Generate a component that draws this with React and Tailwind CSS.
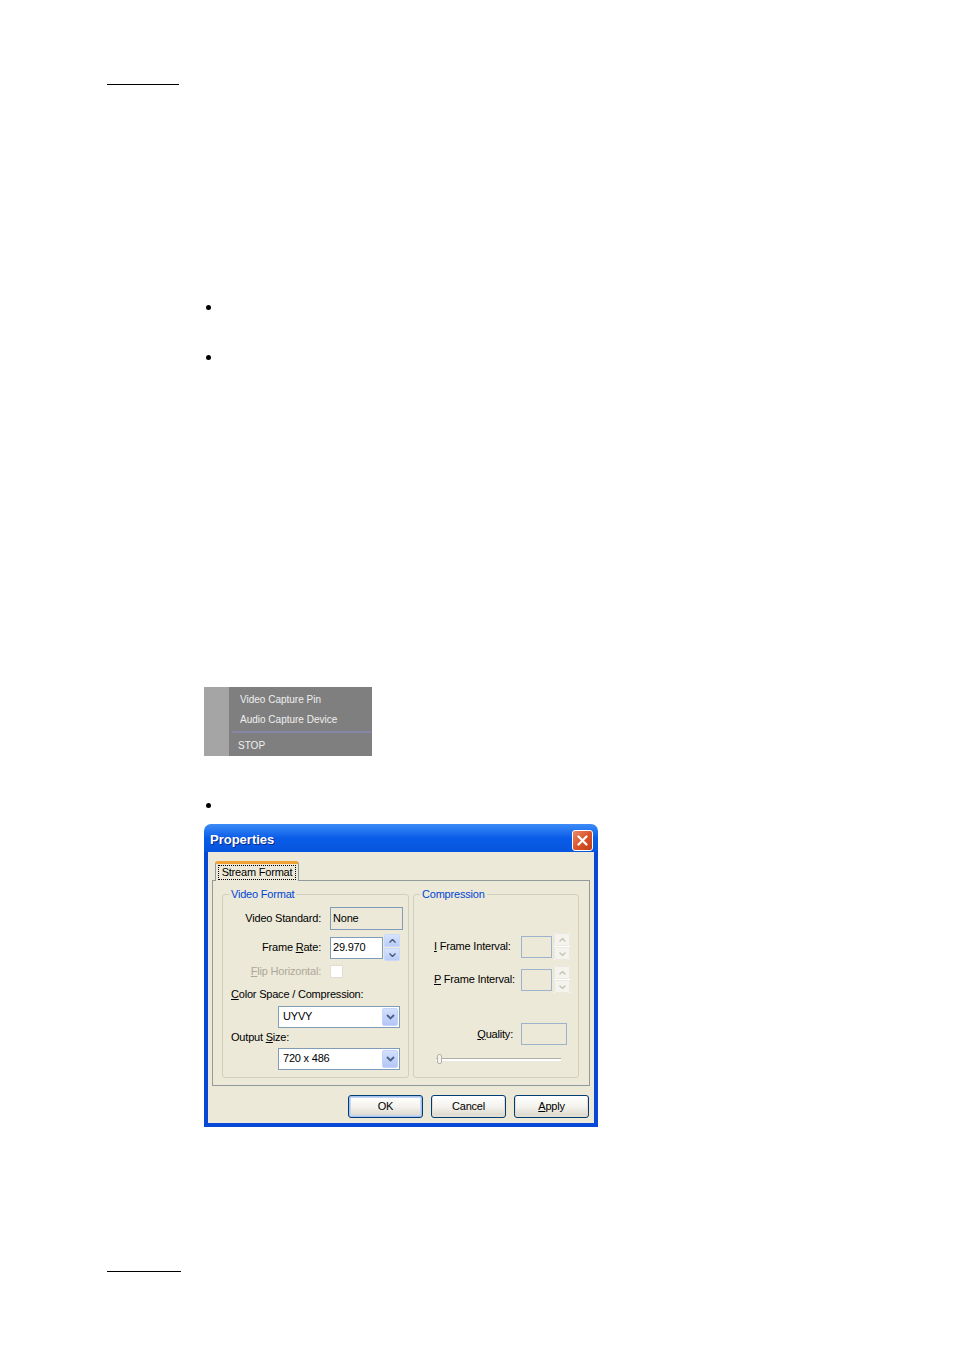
import React from 'react';

// Small round list bullet
const Bullet = ({ className }) => (
  <div className={`ml-[206px] w-[5px] h-[5px] rounded-full bg-black ${className}`} />
);

// Context menu captured from the graph editor
const CaptureMenu = () => (
  <div className="ml-[204px] mt-[327px] w-[168px] h-[69px] flex bg-[#7f7f7f] text-[10px] text-[#efefef] font-['Liberation_Sans',Arial,sans-serif]">
    <div className="w-[25px] bg-[#a5a5a5]" />
    <div className="flex-1 flex flex-col">
      <div className="h-[20px] mt-[3px] pl-[11px] leading-[20px]">Video Capture Pin</div>
      <div className="h-[20px] pl-[11px] leading-[20px]">Audio Capture Device</div>
      <div className="mt-[1px] ml-[3px] h-[2px] bg-[#8686a8]" />
      <div className="h-[20px] mt-[3px] pl-[9px] leading-[20px]">STOP</div>
    </div>
  </div>
);

const Arrow = ({ up, color }) => (
  <svg width="7" height="4" viewBox="0 0 7 4">
    <path d={up ? 'M0.5 3.5 L3.5 0.5 L6.5 3.5' : 'M0.5 0.5 L3.5 3.5 L6.5 0.5'} fill="none" stroke={color} strokeWidth="1.5" />
  </svg>
);

const Spinner = ({ disabled }) => (
  <div className={`w-[16px] h-[27px] flex flex-col gap-px ${disabled ? 'bg-white' : ''}`}>
    <div className={`flex-1 flex items-center justify-center rounded-t-[2px] border ${disabled ? 'bg-[#f4f3ee] border-[#eae8df]' : 'bg-linear-to-b from-[#d8e4fd] to-[#b9cbf7] border-[#c9d8fb]'}`}>
      <Arrow up color={disabled ? '#c9c7ba' : '#4d6185'} />
    </div>
    <div className={`flex-1 flex items-center justify-center rounded-b-[2px] border ${disabled ? 'bg-[#f4f3ee] border-[#eae8df]' : 'bg-linear-to-b from-[#d8e4fd] to-[#b9cbf7] border-[#c9d8fb]'}`}>
      <Arrow color={disabled ? '#c9c7ba' : '#4d6185'} />
    </div>
  </div>
);

const Combo = ({ value, className }) => (
  <div className={`ml-[55px] w-[122px] h-[22px] flex items-center border border-[#7f9db9] bg-white p-px ${className}`}>
    <span className="flex-1 pl-[3px]">{value}</span>
    <div className="w-[16px] h-full flex items-center justify-center rounded-[2px] bg-linear-to-b from-[#d3e0fd] to-[#b3c6f5] border border-[#c3d3fb]">
      <svg width="9" height="6" viewBox="0 0 9 6">
        <path d="M1 1 L4.5 4.5 L8 1" fill="none" stroke="#4d6185" strokeWidth="1.8" />
      </svg>
    </div>
  </div>
);

const GroupBox = ({ title, className, children }) => (
  <fieldset className={`border border-[#d0d0bf] rounded-[3px] px-0 pb-[5px] ${className}`}>
    <legend className="ml-[6px] px-[2px] text-[#0046d5] leading-[14px]">{title}</legend>
    {children}
  </fieldset>
);

const XpButton = ({ children, isDefault }) => (
  <button
    className={`w-[75px] h-[23px] rounded-[3px] border border-[#003c74] bg-linear-to-b from-white via-[#f4f3ee] to-[#d9d4c8] text-[11px] text-black ${isDefault ? 'shadow-[inset_0_0_0_1px_#a6c0ef,inset_0_0_0_2px_#c4d5f5]' : 'shadow-[inset_0_-1px_0_1px_#e3ded2]'}`}
  >
    {children}
  </button>
);

const PropertiesDialog = () => (
  <div className="ml-[204px] mt-[16px] w-[394px] text-[11px] tracking-[-0.2px] text-black font-['Liberation_Sans',Arial,sans-serif]">
    {/* title bar */}
    <div className="h-[28px] pt-[4px] flex items-center rounded-t-[7px] bg-linear-to-b from-[#3b8bf7] via-[#0a5ce8] to-[#0655dd]">
      <span className="flex-1 pl-[6px] text-[13px] font-bold tracking-normal text-white [text-shadow:1px_1px_#0b2b8a]">Properties</span>
      <div className="mr-[5px] w-[21px] h-[21px] rounded-[3px] border border-white bg-linear-to-br from-[#e98a68] via-[#d9542b] to-[#c13d15] flex items-center justify-center">
        <svg width="11" height="11" viewBox="0 0 11 11">
          <path d="M1.5 1.5 L9.5 9.5 M9.5 1.5 L1.5 9.5" stroke="white" strokeWidth="2.2" strokeLinecap="round" />
        </svg>
      </div>
    </div>

    {/* body */}
    <div className="border-x-4 border-b-4 border-[#0848d6] bg-[#ece9d8] pt-[9px] pb-[5px]">
      <div className="ml-[7px] relative z-10 w-[84px] h-[20px] -mb-px border border-b-0 border-[#919b9c] border-t-[3px] border-t-[#f0a235] rounded-t-[3px] bg-[#ece9d8] px-[2px] pt-px">
        <div className="h-[15px] border border-dotted border-black flex items-center justify-center leading-none">Stream Format</div>
      </div>
      <div className="ml-[4px] w-[378px] h-[206px] border border-[#919b9c] bg-[#ece9d8] pt-[6px] pl-[9px] flex gap-[4px]">
        <GroupBox title="Video Format" className="w-[187px] h-[191px]">
          <div className="mt-[6px] flex items-center">
            <span className="w-[98px] text-right">Video Standard:</span>
            <div className="ml-[9px] w-[73px] h-[23px] border border-[#7f9db9] flex items-center pl-[2px]">None</div>
          </div>
          <div className="mt-[4px] flex items-center">
            <span className="w-[98px] text-right">Frame <span className="underline">R</span>ate:</span>
            <div className="ml-[9px] w-[53px] h-[22px] border border-[#7f9db9] bg-white flex items-center pl-[2px]">29.970</div>
            <div className="ml-[1px]"><Spinner /></div>
          </div>
          <div className="mt-[2px] flex items-center">
            <span className="w-[98px] text-right text-[#aca899]"><span className="underline">F</span>lip Horizontal:</span>
            <div className="ml-[9px] w-[13px] h-[13px] border border-[#e0ddd2] bg-white" />
          </div>
          <div className="mt-[7px] pl-[8px] leading-[14px]"><span className="underline">C</span>olor Space / Compression:</div>
          <Combo value="UYVY" className="mt-[5px]" />
          <div className="mt-[2px] pl-[8px] leading-[14px]">Output <span className="underline">S</span>ize:</div>
          <Combo value="720 x 486" className="mt-[4px]" />
        </GroupBox>

        <GroupBox title="Compression" className="w-[166px] h-[191px]">
          <div className="mt-[32px] flex items-center pl-[20px]">
            <span className="w-[87px]"><span className="underline">I</span> Frame Interval:</span>
            <div className="w-[31px] h-[22px] border border-[#9db2cc]" />
            <div className="ml-[2px]"><Spinner disabled /></div>
          </div>
          <div className="mt-[6px] flex items-center pl-[20px]">
            <span className="w-[87px]"><span className="underline">P</span> Frame Interval:</span>
            <div className="w-[31px] h-[22px] border border-[#9db2cc]" />
            <div className="ml-[2px]"><Spinner disabled /></div>
          </div>
          <div className="mt-[30px] flex items-center justify-end pr-[11px]">
            <span className="mr-[8px]"><span className="underline">Q</span>uality:</span>
            <div className="w-[46px] h-[22px] border border-[#9db2cc]" />
          </div>
          <div className="mt-[9px] ml-[22px] w-[125px] h-[10px] flex items-center relative">
            <div className="w-full h-[3px] border-t border-[#b0aea4] bg-white" />
            <div className="absolute left-px top-0 w-[5px] h-[10px] rounded-[2px] border border-[#b5b3a8] bg-[#f4f3ee]" />
          </div>
        </GroupBox>
      </div>
      <div className="mt-[9px] pr-[5px] flex justify-end gap-[8px]">
        <XpButton isDefault>OK</XpButton>
        <XpButton>Cancel</XpButton>
        <XpButton><span className="underline">A</span>pply</XpButton>
      </div>
    </div>
  </div>
);

export default function App() {
  return (
    <div className="w-[954px] h-[1350px] bg-white flex flex-col">
      <div className="ml-[107px] mt-[84px] w-[72px] h-px bg-black" />
      <Bullet className="mt-[220px]" />
      <Bullet className="mt-[45px]" />
      <CaptureMenu />
      <Bullet className="mt-[47px]" />
      <PropertiesDialog />
      <div className="ml-[107px] mt-[144px] w-[74px] h-px bg-black" />
    </div>
  );
}
